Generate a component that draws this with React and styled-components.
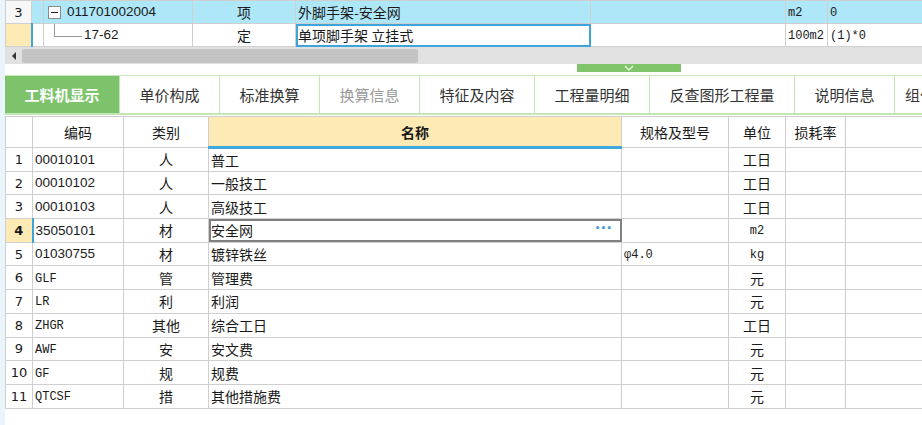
import React from "react";
import styled, { createGlobalStyle } from "styled-components";

const GlobalStyle = createGlobalStyle`
  html, body {
    margin: 0;
    padding: 0;
    background: #ffffff;
  }
  body {
    font-family: "Noto Sans CJK SC", "Noto Sans", sans-serif;
    color: #1a1a1a;
  }
`;

const Page = styled.div`
  width: 922px;
  height: 425px;
  overflow: hidden;
  border-left: 5px solid #eaf5fb;
  box-sizing: border-box;
  display: flex;
  flex-direction: column;
  background: #fff;
`;

const Grid = styled.table`
  border-collapse: collapse;
  table-layout: fixed;
  width: 917px;
  font-size: 13px;
  line-height: 1;
`;

const Row = styled.tr`
  height: ${p => p.h || 23}px;
  background: ${p => p.bg || "#fff"};
`;

const fontFor = p =>
  p.mono
    ? 'font-family: "Liberation Mono", "DejaVu Sans Mono", monospace; font-size: 12px; padding-top: 3px;'
    : p.num
    ? 'font-family: "Liberation Sans", Arial, sans-serif; font-size: 13.5px;'
    : 'font-family: "Noto Sans CJK SC", sans-serif; font-size: 14px;';

const Cell = styled.td`
  border: 1px solid #cfcfcf;
  padding-left: ${p => (p.align === "center" ? 0 : 2)}px;
  padding-right: ${p => (p.align === "center" ? 0 : 2)}px;
  text-align: ${p => p.align || "left"};
  white-space: nowrap;
  overflow: hidden;
  ${fontFor}
  background: ${p => p.bg || "transparent"};
  position: relative;
  vertical-align: middle;
`;

const IndexCell = styled(Cell)`
  text-align: center;
  padding: 0;
  font-family: "DejaVu Sans", sans-serif;
  font-size: 13px;
  font-weight: ${p => (p.active ? 700 : 400)};
  background: ${p => (p.active ? "#fdeab4" : p.bg || "transparent")};
  border-right: ${p => (p.marker ? "2px solid #3fa4d9" : "1px solid #cfcfcf")};
`;

const EditCell = styled(Cell)`
  outline: 2px solid ${p => p.color};
  outline-offset: -2px;
`;

const Tree = styled.div`
  display: flex;
  align-items: center;
  position: relative;
`;

const ToggleBox = styled.span`
  width: 11px;
  height: 11px;
  border: 1px solid #8a8a8a;
  background: #fff;
  margin: 0 6px 0 2px;
  position: relative;
  &::after {
    content: "";
    position: absolute;
    left: 2px;
    right: 2px;
    top: 5px;
    height: 1px;
    background: #222;
  }
`;

const Elbow = styled.span`
  position: absolute;
  left: 8px;
  top: -12px;
  width: 27px;
  height: 20px;
  border-left: 1px solid #9a9a9a;
  border-bottom: 1px solid #9a9a9a;
`;

const Scrollbar = styled.div`
  height: 17px;
  background: #e1e1e1;
  display: flex;
  align-items: center;
`;

const ArrowLeft = styled.div`
  width: 17px;
  display: flex;
  justify-content: center;
  &::before {
    content: "";
    border-style: solid;
    border-width: 4px 4px 4px 0;
    border-color: transparent #333 transparent transparent;
  }
`;

const Thumb = styled.div`
  width: 396px;
  height: 14px;
  background: #c4c4c4;
  border-radius: 3px;
`;

const Splitter = styled.div`
  height: 11px;
  display: flex;
  justify-content: flex-start;
  padding-left: 572px;
  border-bottom: 1px solid #c9ebbd;
`;

const Handle = styled.div`
  width: 104px;
  height: 8px;
  background: #80c46a;
  display: flex;
  justify-content: center;
  align-items: center;
`;

const Tabs = styled.div`
  display: flex;
  height: 37px;
  border-bottom: 2px solid #c2e6b4;
  margin-bottom: 1px;
`;

const Tab = styled.div`
  flex: 0 0 ${p => p.w}px;
  display: flex;
  align-items: center;
  justify-content: ${p => (p.clip ? "flex-start" : "center")};
  padding-left: ${p => (p.clip ? 10 : 0)}px;
  font-size: 15px;
  white-space: nowrap;
  overflow: hidden;
  border-right: 1px solid #c2e6b4;
  box-sizing: border-box;
  color: ${p => (p.active ? "#fff" : p.dim ? "#9a9a9a" : "#333")};
  background: ${p => (p.active ? "#7dc36b" : "#fff")};
  font-weight: ${p => (p.active ? 700 : 400)};
`;

const HeadCell = styled.th`
  border: 1px solid #cfcfcf;
  font-weight: ${p => (p.main ? 700 : 400)};
  font-size: 14px;
  font-family: "Noto Sans CJK SC", sans-serif;
  background: ${p => (p.main ? "#fdeab4" : "#fff")};
  border-bottom: ${p => (p.main ? "3px solid #3fa9dd" : "1px solid #cfcfcf")};
  text-align: center;
  white-space: nowrap;
  padding: 0;
`;

const Dots = styled.span`
  position: absolute;
  right: 9px;
  top: 5px;
  color: #4a9fd8;
  font-family: "DejaVu Sans", sans-serif;
  font-size: 9px;
  font-weight: 700;
  letter-spacing: 0;
`;

const topCols = [26, 12, 149, 103, 295, 195, 42, 95];
const bottomCols = [27, 91, 85, 413, 107, 57, 60, 77];

const tabs = [
  { t: "工料机显示", w: 115, active: true },
  { t: "单价构成", w: 100 },
  { t: "标准换算", w: 100 },
  { t: "换算信息", w: 100, dim: true },
  { t: "特征及内容", w: 115 },
  { t: "工程量明细", w: 115 },
  { t: "反查图形工程量", w: 145 },
  { t: "说明信息", w: 100 },
  { t: "组价方案", w: 60, clip: true },
];

const items = [
  ["00010101", "人", "普工", "", "工日"],
  ["00010102", "人", "一般技工", "", "工日"],
  ["00010103", "人", "高级技工", "", "工日"],
  ["35050101", "材", "安全网", "", "m2"],
  ["01030755", "材", "镀锌铁丝", "φ4.0", "kg"],
  ["GLF", "管", "管理费", "", "元"],
  ["LR", "利", "利润", "", "元"],
  ["ZHGR", "其他", "综合工日", "", "工日"],
  ["AWF", "安", "安文费", "", "元"],
  ["GF", "规", "规费", "", "元"],
  ["QTCSF", "措", "其他措施费", "", "元"],
];

const isAscii = s => /^[A-Za-z0-9.]+$/.test(s);

function TopGrid() {
  return (
    <Grid>
      <colgroup>
        {topCols.map((w, i) => (
          <col key={i} style={{ width: w }} />
        ))}
      </colgroup>
      <tbody>
        <Row bg="#aee7f8">
          <IndexCell bg="#f7f7f7">3</IndexCell>
          <Cell />
          <Cell num>
            <Tree>
              <ToggleBox />
              011701002004
            </Tree>
          </Cell>
          <Cell align="center">项</Cell>
          <Cell>外脚手架-安全网</Cell>
          <Cell />
          <Cell mono>m2</Cell>
          <Cell mono>0</Cell>
        </Row>
        <Row>
          <IndexCell active marker />
          <Cell />
          <Cell num>
            <Tree>
              <Elbow />
              <span style={{ paddingLeft: 38 }}>17-62</span>
            </Tree>
          </Cell>
          <Cell align="center">定</Cell>
          <EditCell color="#3fa4d9">单项脚手架 立挂式</EditCell>
          <Cell />
          <Cell mono>100m2</Cell>
          <Cell mono>(1)*0</Cell>
        </Row>
      </tbody>
    </Grid>
  );
}

function BottomGrid() {
  return (
    <Grid>
      <colgroup>
        {bottomCols.map((w, i) => (
          <col key={i} style={{ width: w }} />
        ))}
      </colgroup>
      <thead>
        <Row h={31}>
          <HeadCell />
          <HeadCell>编码</HeadCell>
          <HeadCell>类别</HeadCell>
          <HeadCell main>名称</HeadCell>
          <HeadCell>规格及型号</HeadCell>
          <HeadCell>单位</HeadCell>
          <HeadCell>损耗率</HeadCell>
          <HeadCell />
        </Row>
      </thead>
      <tbody>
        {items.map(([code, type, name, spec, unit], i) => {
          const active = i === 3;
          const letters = /^[A-Z]+$/.test(code);
          return (
            <Row key={code} h={23.7}>
              <IndexCell active={active} marker={active}>
                {i + 1}
              </IndexCell>
              <Cell num={!letters} mono={letters}>
                {code}
              </Cell>
              <Cell align="center">{type}</Cell>
              {active ? (
                <EditCell color="#808080">
                  {name}
                  <Dots>•••</Dots>
                </EditCell>
              ) : (
                <Cell>{name}</Cell>
              )}
              <Cell mono>{spec}</Cell>
              <Cell align="center" mono={isAscii(unit)}>
                {unit}
              </Cell>
              <Cell />
              <Cell />
            </Row>
          );
        })}
      </tbody>
    </Grid>
  );
}

export default function App() {
  return (
    <>
      <GlobalStyle />
      <Page>
        <TopGrid />
        <Scrollbar>
          <ArrowLeft />
          <Thumb />
        </Scrollbar>
        <Splitter>
          <Handle>
            <svg width="12" height="7" viewBox="0 0 12 7">
              <path d="M2 1 L6 5 L10 1" stroke="#e6f4df" strokeWidth="1.5" fill="none" />
            </svg>
          </Handle>
        </Splitter>
        <Tabs>
          {tabs.map(tab => (
            <Tab key={tab.t} w={tab.w} active={tab.active} dim={tab.dim} clip={tab.clip}>
              {tab.t}
            </Tab>
          ))}
        </Tabs>
        <BottomGrid />
      </Page>
    </>
  );
}
